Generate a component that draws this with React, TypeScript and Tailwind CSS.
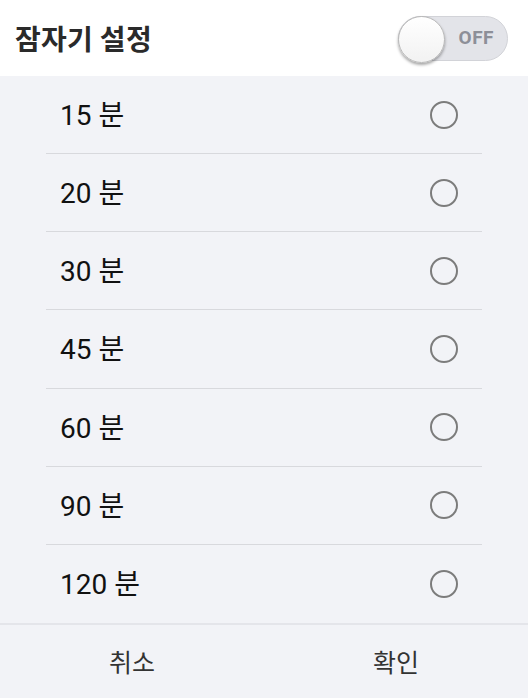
import React from "react";

const rows = ["15", "20", "30", "45", "60", "90", "120"];

export default function App() {
  return (
    <div
      className="w-[528px] h-[698px] flex flex-col bg-[#f2f3f7] overflow-hidden"
      style={{ fontFamily: 'Roboto, "Noto Sans CJK KR", sans-serif' }}
    >
      <div className="h-[76px] bg-white flex items-center justify-between pl-[15px] pr-[20px]">
        <div className="text-[28px] font-bold text-[#2a2a2a] tracking-[0.3px]" style={{ fontFamily: '"Noto Sans CJK KR", sans-serif' }}>
          잠자기 설정
        </div>
        <div className="relative w-[110px] h-[45px] rounded-full bg-[#e3e4e9] border border-[#d2d3d8] flex items-center justify-end pr-[13px]">
          <span className="text-[19px] font-bold text-[#8d8f98] tracking-[0.5px]" style={{ fontFamily: 'Roboto, sans-serif' }}>OFF</span>
          <div className="absolute left-[-1px] top-[-1px] w-[47px] h-[47px] rounded-full bg-gradient-to-b from-white to-[#f2f2f2] border border-[#b8b8b8] shadow-[0_2px_3px_rgba(0,0,0,0.35)]" />
        </div>
      </div>
      <div className="h-[547px] flex flex-col">
        {rows.map((r, i) => (
          <div key={r} className="flex-1 px-[46px] flex flex-col">
            <div
              className={`flex-1 flex items-center justify-between pl-[14px] pr-[24px] ${
                i < rows.length - 1 ? "border-b border-[#d8d9dd]" : ""
              }`}
            >
              <span className="text-[28px] text-[#111] leading-none">
                {r} <span style={{ fontFamily: '"Noto Sans CJK KR", sans-serif' }}>분</span>
              </span>
              <div className="w-[28px] h-[28px] rounded-full border-2 border-[#7c7c7c]" />
            </div>
          </div>
        ))}
      </div>
      <div className="border-t-2 border-[#e4e5ea] flex-1 flex" style={{ fontFamily: '"Noto Sans CJK KR", sans-serif' }}>
        <div className="flex-1 flex items-center justify-center text-[25px] text-[#333]">취소</div>
        <div className="flex-1 flex items-center justify-center text-[25px] text-[#333]">확인</div>
      </div>
    </div>
  );
}
